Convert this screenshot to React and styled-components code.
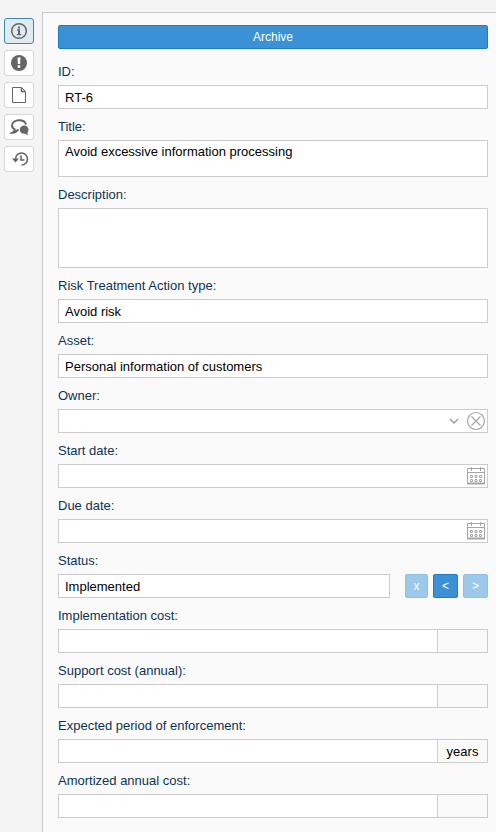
import React, { useId } from "react";
import styled, { createGlobalStyle } from "styled-components";

const GlobalStyle = createGlobalStyle`
  *, *::before, *::after { box-sizing: border-box; }
  body {
    margin: 0;
    background: #f4f4f4;
    color: #000;
    font: 13px/16px "Liberation Sans", Arial, sans-serif;
  }
  button, input, textarea, select { font: inherit; color: inherit; margin: 0; }
`;

const Page = styled.div`
  display: flex;
  min-height: 100vh;
  padding-top: 12px;
`;

const Sidebar = styled.nav`
  flex: none;
  width: 42px;
  padding: 6px 8px 6px 4px;
  display: flex;
  flex-direction: column;
  gap: 6px;
`;

const TabButton = styled.button`
  display: flex;
  align-items: center;
  justify-content: center;
  height: 26px;
  padding: 0;
  border: 1px solid ${(p) => (p.$active ? "#3a87ad" : "#d8d8d8")};
  border-radius: 3px;
  background: ${(p) => (p.$active ? "#dfeaf1" : "#fff")};
  color: #666;
  cursor: pointer;
`;

const Panel = styled.main`
  flex: 1;
  min-width: 0;
  padding: 12px 8px 14px 15px;
  border-top: 1px solid #c8c8c8;
  border-left: 1px solid #c8c8c8;
  background: #fafafa;
`;

const ActionButton = styled.button`
  height: 24px;
  padding: 0;
  border: 1px solid #1c7cc9;
  border-radius: 2px;
  background: #3a91d5;
  color: #fff;
  font-size: 12px;
  cursor: pointer;

  &:disabled {
    border-color: #8dc0e8;
    background: #9cc8ea;
    cursor: default;
  }
`;

const ArchiveButton = styled(ActionButton)`
  display: block;
  width: 100%;
  margin-bottom: 5px;
`;

const StepButton = styled(ActionButton)`
  flex: none;
  width: ${(p) => (p.$narrow ? "23px" : "25px")};
`;

const FieldLabel = styled.label`
  display: block;
  padding: 10px 0 5px;
  color: #0d3354;
`;

const TextInput = styled.input`
  display: block;
  flex: 1;
  width: 100%;
  min-width: 0;
  height: 24px;
  padding: 0 6px;
  border: 1px solid #ccc;
  border-radius: 0;
  background: #fff;
`;

const TextArea = styled.textarea`
  display: block;
  width: 100%;
  height: ${(p) => (p.$tall ? "60px" : "37px")};
  padding: 3px 6px;
  border: 1px solid #ccc;
  border-radius: 0;
  background: #fff;
  resize: none;
  overflow: hidden;
`;

const Box = styled.div`
  display: flex;
  align-items: center;
  height: 24px;
  padding-right: 1px;
  border: 1px solid #ccc;
  background: #fff;
  color: #999;
`;

const BoxInput = styled(TextInput)`
  height: 22px;
  border: 0;
  color: #000;
`;

const OwnerSelect = styled.select`
  flex: 1;
  min-width: 0;
  height: 22px;
  padding: 0 6px;
  border: 0;
  background: transparent;
  color: #000;
  appearance: none;
`;

const Chevron = styled.svg`
  flex: none;
  margin-right: 7px;
  pointer-events: none;
`;

const IconButton = styled.button`
  flex: none;
  display: flex;
  align-items: center;
  justify-content: center;
  width: 20px;
  height: 20px;
  padding: 0;
  border: 0;
  background: none;
  color: #a6a6a6;
  cursor: pointer;
`;

const Row = styled.div`
  display: flex;
`;

const StepButtons = styled.div`
  display: flex;
  gap: 5px;
  margin-left: 15px;
`;

const Unit = styled.span`
  flex: none;
  width: 50px;
  height: 24px;
  border: 1px solid #ccc;
  border-left: 0;
  line-height: 23px;
  text-align: center;
`;

function InfoIcon() {
  return (
    <svg width="18" height="18" viewBox="0 0 18 18" aria-hidden="true">
      <circle cx="9" cy="9" r="7.3" fill="none" stroke="currentColor" strokeWidth="1.5" />
      <path d="M8 4.5h2v2H8zM7 7.3h3V12h1.200v1.300H6.800V12H8V8.500H7z" fill="currentColor" />
    </svg>
  );
}

function AlertIcon() {
  return (
    <svg width="18" height="18" viewBox="0 0 18 18" aria-hidden="true">
      <circle cx="9" cy="9" r="8" fill="currentColor" />
      <path d="M7.500 3.500h3l-.4 6.500H7.900zM7.700 11.300h2.600v2.500H7.700z" fill="#fff" />
    </svg>
  );
}

function FileIcon() {
  return (
    <svg width="18" height="18" viewBox="0 0 18 18" aria-hidden="true">
      <path d="M2.500 1.500h9l4 4v11h-13z" fill="none" stroke="currentColor" />
      <path d="M11.500 1.500v4h4" fill="none" stroke="currentColor" strokeWidth="1.500" />
    </svg>
  );
}

function CommentsIcon() {
  return (
    <svg width="20" height="18" viewBox="-1 0 20 18" aria-hidden="true">
      <path d="M5 11.500C3 10.600 2 9.200 2 7.500 2 4.400 5.100 2.200 9 2.200c3.800 0 6.600 1.900 7 4.500M5 11.300c0 1.500-1 2.500-2.500 3.400 2.200 0 3.800-.8 4.800-2.400h1.400" fill="none" stroke="currentColor" strokeWidth="2" />
      <path d="M14.200 7.500c2.600 0 4.300 1.900 4.300 4.200 0 1.300-.5 2.300-1.200 3 .1.900.6 1.700 1.200 2.300-1.500 0-2.700-.5-3.500-1.200-3 .3-5.200-1.500-5.200-4.100 0-2.300 1.900-4.200 4.400-4.200z" fill="currentColor" />
    </svg>
  );
}

function HistoryIcon() {
  return (
    <svg width="20" height="18" viewBox="-1 0 20 18" aria-hidden="true">
      <path d="M5.500 9a6 6 0 1 1 6 6M11 5.500v4.500h3.500" fill="none" stroke="currentColor" strokeWidth="1.600" />
      <path d="M2 8.500h7l-3.500 4z" fill="currentColor" />
    </svg>
  );
}

function ClearIcon() {
  return (
    <svg width="20" height="20" viewBox="0 0 20 20" fill="none" stroke="currentColor" aria-hidden="true">
      <circle cx="10" cy="10" r="8.500" strokeWidth="1.200" />
      <path d="M5.500 5.500l9 9M14.500 5.500l-9 9" strokeWidth="1.200" />
    </svg>
  );
}

function CalendarIcon() {
  return (
    <svg width="20" height="20" viewBox="0 0 20 20" fill="none" stroke="currentColor" aria-hidden="true">
      <path d="M1.500 2.500h17v15h-17zM1 6.500h18M5.500 1v4M14.500 1v4" />
      <path d="M1 17.500h18" strokeWidth="2" />
      <path d="M4.500 9.500h2v2h-2zM9 9.500h2v2H9zM13.500 9.500h2v2h-2zM4.500 13.500h2v2h-2zM9 13.500h2v2H9zM13.500 13.500h2v2h-2z" />
    </svg>
  );
}

const tabs = [
  { name: "Details", Icon: InfoIcon },
  { name: "Issues", Icon: AlertIcon },
  { name: "Documents", Icon: FileIcon },
  { name: "Comments", Icon: CommentsIcon },
  { name: "History", Icon: HistoryIcon },
];

function Field({ label, children }) {
  const id = useId();
  return (
    <div>
      <FieldLabel htmlFor={id}>{label}:</FieldLabel>
      {children(id)}
    </div>
  );
}

function TextField({ label, value = "" }) {
  return <Field label={label}>{(id) => <TextInput id={id} defaultValue={value} />}</Field>;
}

function AreaField({ label, value = "", tall }) {
  return <Field label={label}>{(id) => <TextArea id={id} $tall={tall} defaultValue={value} />}</Field>;
}

function DateField({ label }) {
  return (
    <Field label={label}>
      {(id) => (
        <Box>
          <BoxInput id={id} />
          <IconButton type="button" aria-label={`Choose ${label.toLowerCase()}`}>
            <CalendarIcon />
          </IconButton>
        </Box>
      )}
    </Field>
  );
}

function UnitField({ label, unit }) {
  return (
    <Field label={label}>
      {(id) => (
        <Row>
          <TextInput id={id} />
          <Unit>{unit}</Unit>
        </Row>
      )}
    </Field>
  );
}

export default function App() {
  return (
    <>
      <GlobalStyle />
      <Page>
        <Sidebar>
          {tabs.map(({ name, Icon }, i) => (
            <TabButton key={name} type="button" aria-label={name} $active={i === 0}>
              <Icon />
            </TabButton>
          ))}
        </Sidebar>
        <Panel>
          <ArchiveButton type="button">Archive</ArchiveButton>
          <TextField label="ID" value="RT-6" />
          <AreaField label="Title" value="Avoid excessive information processing" />
          <AreaField label="Description" tall />
          <TextField label="Risk Treatment Action type" value="Avoid risk" />
          <TextField label="Asset" value="Personal information of customers" />
          <Field label="Owner">
            {(id) => (
              <Box>
                <OwnerSelect id={id}>
                  <option value="" />
                </OwnerSelect>
                <Chevron width="10" height="8" viewBox="0 0 10 8" fill="none" stroke="currentColor" aria-hidden="true">
                  <path d="M1 2l4 4 4-4" strokeWidth="1.300" />
                </Chevron>
                <IconButton type="button" aria-label="Clear owner">
                  <ClearIcon />
                </IconButton>
              </Box>
            )}
          </Field>
          <DateField label="Start date" />
          <DateField label="Due date" />
          <Field label="Status">
            {(id) => (
              <Row>
                <TextInput id={id} defaultValue="Implemented" />
                <StepButtons>
                  <StepButton type="button" $narrow disabled>x</StepButton>
                  <StepButton type="button">&lt;</StepButton>
                  <StepButton type="button" disabled>&gt;</StepButton>
                </StepButtons>
              </Row>
            )}
          </Field>
          <UnitField label="Implementation cost" />
          <UnitField label="Support cost (annual)" />
          <UnitField label="Expected period of enforcement" unit="years" />
          <UnitField label="Amortized annual cost" />
        </Panel>
      </Page>
    </>
  );
}
